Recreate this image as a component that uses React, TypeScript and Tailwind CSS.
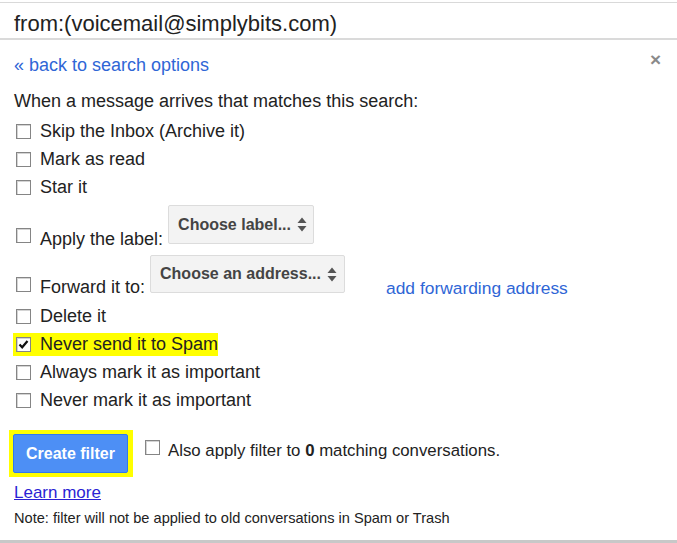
import React from 'react';

const Box: React.FC<{ checked?: boolean; className?: string }> = ({ checked, className = '' }) => (
  <span
    className={`flex h-[15px] w-[15px] shrink-0 items-center justify-center border border-[#858585] bg-white shadow-[inset_1px_1px_0_#d4d4d4] ${className}`}
  >
    {checked && (
      <svg width="11" height="11" viewBox="0 0 11 11">
        <path d="M1.5 5.5 L4.2 8.3 L9.5 2" fill="none" stroke="#111" strokeWidth="2.2" />
      </svg>
    )}
  </span>
);

const Arrows = () => (
  <svg width="10" height="15" viewBox="0 0 10 15" className="ml-[6px] shrink-0">
    <path d="M5 0.5 L9.5 6 L0.5 6 Z" fill="#555" />
    <path d="M5 14.5 L9.5 9 L0.5 9 Z" fill="#555" />
  </svg>
);

const Select: React.FC<{ label: string; className?: string }> = ({ label, className = '' }) => (
  <div
    className={`flex shrink-0 items-center whitespace-nowrap rounded-[2px] border border-[#dcdcdc] bg-[#f3f3f3] pl-[9px] pr-[8px] text-[16px] font-bold text-[#444] ${className}`}
  >
    <span>{label}</span>
    <Arrows />
  </div>
);

const Row: React.FC<{ label: string; checked?: boolean }> = ({ label, checked }) => (
  <div className="flex h-[28px] items-center">
    <Box checked={checked} className="ml-[2px]" />
    <span className="ml-[9px] whitespace-nowrap leading-[20px]">{label}</span>
  </div>
);

export default function App() {
  return (
    <div className="flex h-[543px] w-[677px] flex-col overflow-hidden bg-white font-['Liberation_Sans',Arial,sans-serif] text-[18px] text-[#222]">
      {/* search box */}
      <div className="mt-[2px] flex h-[38px] items-center border-t border-b-2 border-t-[#d9d9d9] border-b-[#dadada] px-[14px] pt-[5px] text-[22px] text-[#222]">
        from:(voicemail@simplybits.com)
      </div>

      <div className="flex flex-col px-[14px]">
        <div className="mt-[11px] flex h-[28px] items-center justify-between">
          <a className="text-[#2f66d6]">« back to search options</a>
          <span className="mr-[2px] -mt-[10px] text-[19px] font-bold text-[#8a8a8a]">×</span>
        </div>

        <div className="mt-[8px] flex h-[28px] items-center whitespace-nowrap">When a message arrives that matches this search:</div>

        <div className="mt-[2px]">
          <Row label="Skip the Inbox (Archive it)" />
          <Row label="Mark as read" />
          <Row label="Star it" />
        </div>

        {/* apply label */}
        <div className="flex h-[45px] items-start whitespace-nowrap">
          <Box className="ml-[2px] mt-[27px]" />
          <span className="ml-[9px] mt-[28px] leading-[20px]">Apply the label:</span>
          <Select label="Choose label..." className="ml-[5px] mt-[4px] h-[39px] w-[146px]" />
        </div>

        {/* forward */}
        <div className="flex h-[56px] items-start whitespace-nowrap">
          <Box className="ml-[2px] mt-[31px]" />
          <span className="ml-[9px] mt-[31px] leading-[20px]">Forward it to:</span>
          <Select label="Choose an address..." className="ml-[5px] mt-[9px] h-[38px] w-[195px]" />
          <a className="ml-[41px] mt-[32px] text-[17.4px] leading-[20px] text-[#2f66d6]">add forwarding address</a>
        </div>

        <Row label="Delete it" />
        <div className="flex h-[28px] items-center">
          <div className="-ml-[1px] flex h-[23px] w-fit items-center whitespace-nowrap bg-[#ffff00] pl-[3px]">
            <Box checked />
            <span className="ml-[9px] leading-[20px]">Never send it to Spam</span>
          </div>
        </div>
        <Row label="Always mark it as important" />
        <Row label="Never mark it as important" />

        {/* create filter */}
        <div className="mt-[16px] flex items-start whitespace-nowrap">
          <div className="-ml-[5px] bg-[#ffff00] p-[4px] pr-[5px]">
            <button className="flex h-[39px] w-[115px] items-center justify-center rounded-[2px] border border-[#3079ed] bg-[#4d8ff5] text-[16px] font-bold text-white">
              Create filter
            </button>
          </div>
          <Box className="ml-[12px] mt-[10px]" />
          <span className="ml-[8px] mt-[11px] text-[16.8px] leading-[20px]">
            Also apply filter to <b>0</b> matching conversations.
          </span>
        </div>

        <a className="mt-[6px] w-fit text-[17px] leading-[20px] text-[#2b1fd4] underline">Learn more</a>
        <div className="mt-[7px] whitespace-nowrap text-[14.6px] leading-[17px] text-[#222]">
          Note: filter will not be applied to old conversations in Spam or Trash
        </div>
      </div>

      <div className="mt-auto h-[3px] bg-[#c8c8c8]" />
    </div>
  );
}
